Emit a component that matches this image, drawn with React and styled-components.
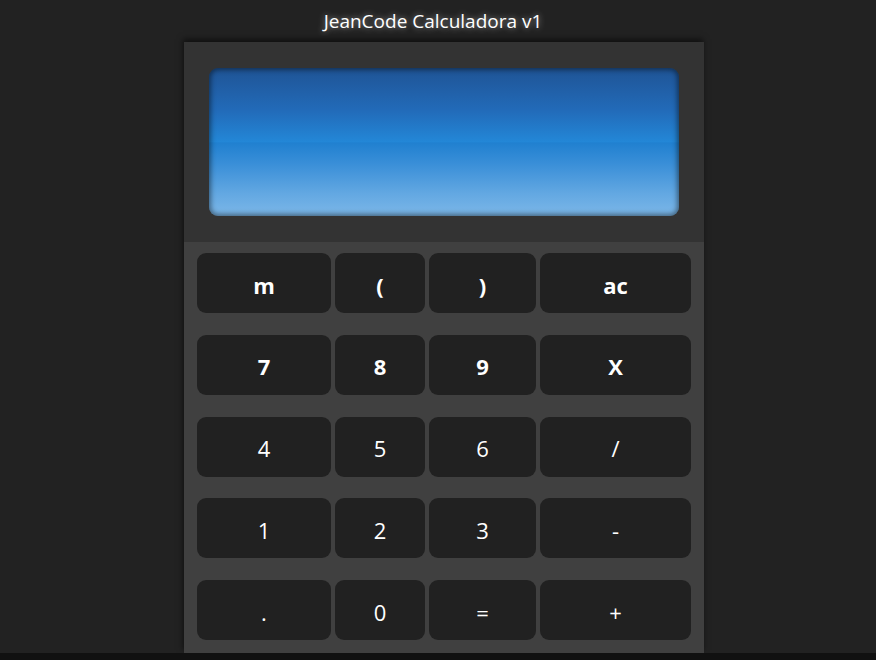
import React from "react";
import styled, { createGlobalStyle } from "styled-components";

const Global = createGlobalStyle`
  html { background: #111111; }
  body {
    margin: 0;
    background: #111111;
    font-family: "Open Sans", "Noto Sans", Arial, sans-serif;
  }
`;

const Page = styled.div`
  background: #222222;
  display: flex;
  flex-direction: column;
  align-items: center;
`;

const Title = styled.h1`
  margin: 0 10px 0 0;
  height: 42px;
  line-height: 42px;
  font-size: 19px;
  font-weight: 400;
  color: #ffffff;
  text-shadow: 0 0 6px rgba(255, 255, 255, 0.55);
`;

const Calculator = styled.div`
  width: 520px;
  margin-left: 12px;
  display: flex;
  flex-direction: column;
  box-shadow: -1px -3px 6px rgba(0, 0, 0, 0.55);
`;

const DisplayArea = styled.div`
  background: #333333;
  height: 200px;
  padding: 26px 25px;
  box-sizing: border-box;
`;

const Screen = styled.div`
  height: 148px;
  border-radius: 9px;
  background: linear-gradient(
    to bottom,
    #1f5495 0%,
    #226ab8 28%,
    #2387d7 50%,
    #2080d0 50.5%,
    #3a8fd8 65%,
    #63a8e2 85%,
    #7cb7e8 100%
  );
  box-shadow: inset 0 0 5px 2px rgba(0, 0, 0, 0.45);
`;

const Keypad = styled.div`
  background: #404040;
  padding: 11px 13px 13px;
  display: grid;
  grid-template-columns: 134px 90px 107px 151px;
  grid-template-rows: repeat(5, 60px);
  column-gap: 4px;
  row-gap: 21.75px;
`;

const Key = styled.button`
  border: none;
  border-radius: 9px;
  background: #212121;
  color: #ffffff;
  font-family: "Open Sans", "Noto Sans", Arial, sans-serif;
  font-size: 22px;
  font-weight: ${(p) => (p.$bold ? 700 : 400)};
  padding: 3px 0 0;
  margin: 0;
  cursor: pointer;
`;

const rows = [
  ["m", "(", ")", "ac"],
  ["7", "8", "9", "X"],
  ["4", "5", "6", "/"],
  ["1", "2", "3", "-"],
  [".", "0", "=", "+"],
];

export default function App() {
  return (
    <Page>
      <Global />
      <Title>JeanCode Calculadora v1</Title>
      <Calculator>
        <DisplayArea>
          <Screen />
        </DisplayArea>
        <Keypad>
          {rows.map((row, i) =>
            row.map((k) => (
              <Key key={i + k} $bold={i < 2}>
                {k}
              </Key>
            ))
          )}
        </Keypad>
      </Calculator>
    </Page>
  );
}
